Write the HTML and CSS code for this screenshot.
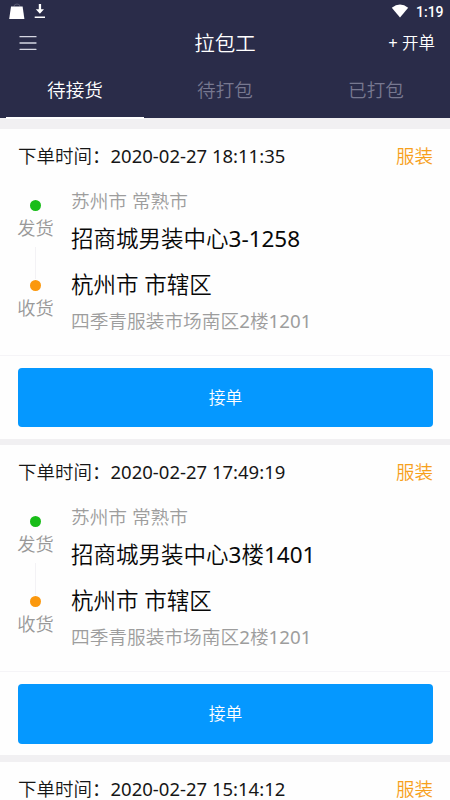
FILE: index.html
```html
<!DOCTYPE html>
<html lang="zh-CN">
<head>
<meta charset="utf-8">
<title>拉包工</title>
<link rel="stylesheet" href="styles.css">
</head>
<body>
<header class="top">
  <div class="status">
    <svg class="bag" viewBox="0 0 16 17"><path d="M5 5V3.5Q5 1 8 1T11 3.5V5" fill="none" stroke="#55576f"/><path d="M2 3.5H13.6L15.4 16H.2Z" fill="#fff"/></svg>
    <svg class="download" viewBox="0 0 12 16"><path d="M4.8 1H7.1V6.2H10L5.9 10.8 1.8 6.2H4.8ZM.7 13.5H11V15H.7Z" fill="#fff"/></svg>
    <svg class="wifi" viewBox="0 0 18 14"><path d="M.8 3.8Q9-2.8 17.2 3.8L9 13.6Z" fill="#fff"/></svg>
    <span class="clock">1:19</span>
  </div>
  <div class="titlebar">
    <svg class="menu" viewBox="0 0 18 16"><path d="M1 1.7H17M1 8H17M1 14.3H17" stroke="#d5d6e2" stroke-width="1.3" stroke-linecap="round"/></svg>
    <h1 class="title">拉包工</h1>
    <span class="create"><span class="num">+</span> 开单</span>
  </div>
  <nav class="tabs">
    <span class="tab active">待接货</span>
    <span class="tab">待打包</span>
    <span class="tab last">已打包</span>
  </nav>
</header>
<main class="orders">
  <section class="order">
    <div class="head"><span>下单时间：<span class="num">2020-02-27 18:11:35</span></span><span class="kind">服装</span></div>
    <div class="route">
      <div class="rail"><i class="dot from"></i><span class="label">发货</span><i class="line"></i><i class="dot to"></i><span class="label">收货</span></div>
      <div class="places"><p class="minor">苏州市 常熟市</p><p class="major">招商城男装中心<span class="num">3-1258</span></p><p class="major second">杭州市 市辖区</p><p class="minor">四季青服装市场南区<span class="num">2</span>楼<span class="num">1201</span></p></div>
    </div>
    <div class="action"><button class="accept">接单</button></div>
  </section>
  <section class="order">
    <div class="head"><span>下单时间：<span class="num">2020-02-27 17:49:19</span></span><span class="kind">服装</span></div>
    <div class="route">
      <div class="rail"><i class="dot from"></i><span class="label">发货</span><i class="line"></i><i class="dot to"></i><span class="label">收货</span></div>
      <div class="places"><p class="minor">苏州市 常熟市</p><p class="major">招商城男装中心<span class="num">3</span>楼<span class="num">1401</span></p><p class="major second">杭州市 市辖区</p><p class="minor">四季青服装市场南区<span class="num">2</span>楼<span class="num">1201</span></p></div>
    </div>
    <div class="action"><button class="accept">接单</button></div>
  </section>
  <section class="order partial">
    <div class="head"><span>下单时间：<span class="num">2020-02-27 15:14:12</span></span><span class="kind">服装</span></div>
  </section>
</main>
</body>
</html>
```
FILE: styles.css
```css
* { box-sizing: border-box; }
body {
  margin: 0;
  height: 800px;
  overflow: hidden;
  display: flex;
  flex-direction: column;
  background: #f1f0f2;
  color: #161616;
  font-family: "Noto Sans", "Noto Sans CJK SC", sans-serif;
  font-weight: 350;
}
.num { font-weight: 400; }
.top { flex: none; height: 117.5px; background: #2a2c49; color: #fff; }
.status { height: 24px; display: flex; align-items: flex-start; padding: 3px 7px 0 9px; }
.bag { width: 16px; height: 17px; }
.download { width: 12px; height: 16px; margin-left: 9px; }
.wifi { width: 18px; height: 14px; margin: 1px 7px 0 auto; }
.clock { font: 500 14px/18px Roboto, sans-serif; width: 27px; white-space: nowrap; }
.titlebar {
  height: 38px;
  display: grid;
  grid-template-columns: 1fr auto 1fr;
  align-items: center;
  padding: 0 15px 0 19px;
}
.menu { width: 18px; height: 16px; }
.title { margin: 0 4px 0 0; font-size: 20.5px; font-weight: 350; line-height: 38px; }
.create { justify-self: end; font-size: 16.5px; line-height: 38px; }
.tabs { height: 55.5px; display: grid; grid-template-columns: repeat(3, 1fr); padding: 0; }
.tab { font-size: 18.6px; line-height: 55px; text-align: center; color: #777890; }
.tab.active { color: #fff; margin: 0 6px; border-bottom: 2px solid #fff; }
.tab.last { padding-left: 2px; }
.orders { flex: 1; min-height: 0; overflow: hidden; display: flex; flex-direction: column; gap: 6.5px; padding-top: 11px; }
.order { flex: none; height: 310px; background: #fefefe; }
.order.partial { flex: 1; height: auto; min-height: 0; overflow: hidden; }
.head {
  height: 56px;
  display: flex;
  justify-content: space-between;
  padding: 0 17px 0 18px;
  font-size: 18.5px;
  line-height: 54px;
  white-space: nowrap;
}
.kind { color: #f7a01c; }
.route { height: 171px; display: flex; border-bottom: 1px solid #f5f4f7; }
.rail { width: 71px; display: flex; flex-direction: column; align-items: center; padding: 15px 0 0; }
.dot { width: 11px; height: 11px; border-radius: 50%; }
.from { background: #18bd18; }
.to { background: #fb980d; }
.label { font-size: 18.3px; line-height: 34px; color: #999; }
.line { width: 1px; height: 32px; margin: 2px 0 1px; background: #f3f2f5; }
.places { white-space: nowrap; }
.minor, .major { margin: 0; }
.minor { font-size: 18.7px; line-height: 32px; color: #9d9d9d; }
.major { font-size: 22.5px; line-height: 43px; color: #080808; }
.second { line-height: 50px; margin-bottom: -5px; }
.action { padding: 12px 17px 0 18px; }
.accept {
  display: block;
  width: 100%;
  height: 59.5px;
  border: 0;
  border-radius: 4px;
  background: #0598ff;
  color: #fff;
  font: 350 16.8px/59px "Noto Sans", "Noto Sans CJK SC", sans-serif;
  padding: 0;
}
```
